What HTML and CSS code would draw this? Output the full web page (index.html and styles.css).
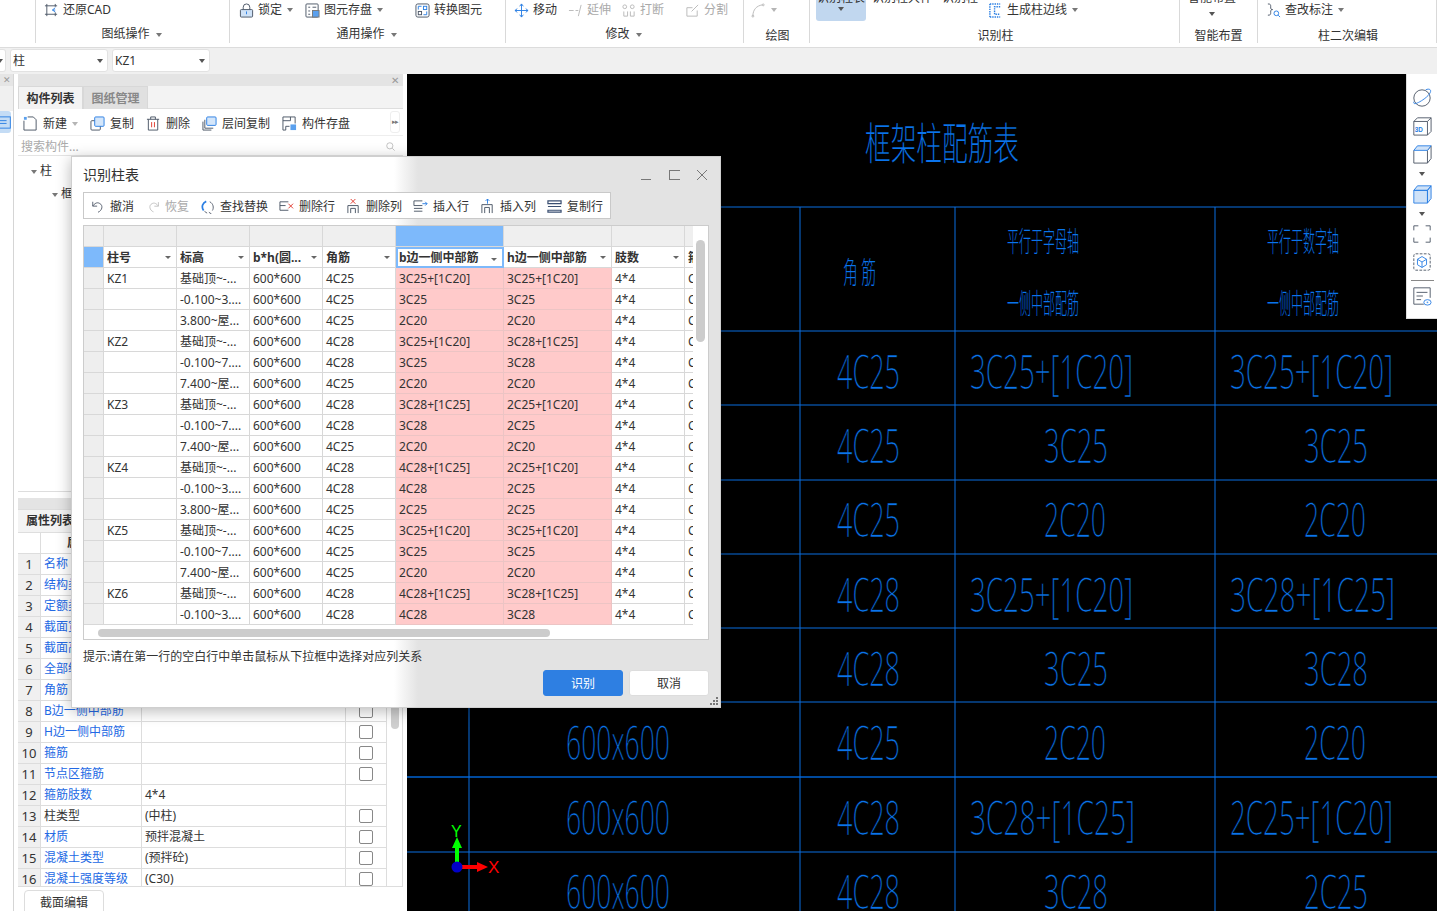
FILE: index.html
```html
<!DOCTYPE html>
<html lang="zh">
<head>
<meta charset="utf-8">
<title>识别柱表</title>
<link rel="stylesheet" href="styles.css">
</head>
<body>
<header class="ribbon">
  <section class="grp g0"></section>
  <section class="grp g1">
    <div class="top">
      <span class="ti"><svg class="ic" viewBox="0 0 16 16"><path class="s" d="M1 3h13M3 1v13M1 12h13M12 1v3M12 10v4"/><path class="a" d="M12 5L9 7.500l3 2M9 7.500h3"/></svg>还原CAD</span>
    </div>
    <div class="lbl up">图纸操作<i class="tri"></i></div>
  </section>
  <section class="grp g2">
    <div class="top">
      <span class="ti t-lock"><svg class="ic" viewBox="0 0 16 16"><path class="s" d="M4.500 7V4.500a3.500 3.500 0 0 1 7 0V7"/><rect class="s f" x="1.500" y="7" width="13" height="8" rx="1"/><path class="a" d="M8 9v3"/></svg>锁定<i class="tri"></i></span>
      <span class="ti t-save"><svg class="ic" viewBox="0 0 16 16"><rect class="s" x="1" y="1" width="13" height="14" rx="1"/><path class="s" d="M3.500 4.500h2M8 4.500h4M3.500 8.500h2M3.500 12h2"/><rect class="af" x="8" y="8" width="7" height="7"/></svg>图元存盘<i class="tri"></i></span>
      <span class="ti"><svg class="ic" viewBox="0 0 16 16"><rect class="s" x="1" y="1" width="14" height="14" rx="2"/><rect class="a" x="9" y="3.500" width="3.500" height="3.500"/><rect class="s" x="3.500" y="9" width="3.500" height="3.500"/><path class="a" d="M3.500 7V3.500H7M12.500 9v3.500H9"/></svg>转换图元</span>
    </div>
    <div class="lbl up">通用操作<i class="tri"></i></div>
  </section>
  <section class="grp g3">
    <div class="top">
      <span class="ti t-move"><svg class="ic" viewBox="0 0 16 16"><path class="a" d="M8 1v14M1 8h14M8 1L6 3.500M8 1l2 2.500M8 15l-2-2.500M8 15l2-2.500M1 8l2.500-2M1 8l2.500 2M15 8l-2.500-2M15 8l-2.500 2"/></svg>移动</span>
      <span class="ti off"><svg class="ic" viewBox="0 0 16 16"><path class="o" d="M1 8h5M8 8h3M14 2L11 14"/></svg>延伸</span>
      <span class="ti off t-break"><svg class="ic" viewBox="0 0 16 16"><path class="o" d="M3 9v5h4V9M10 9v5h4V9"/><circle class="o" cx="4" cy="4" r="2"/><circle class="o" cx="12" cy="4" r="2"/></svg>打断</span>
      <span class="ti off"><svg class="ic" viewBox="0 0 16 16"><path class="o" d="M13 8v6H2V5h6M14 2L7 9"/></svg>分割</span>
    </div>
    <div class="lbl up">修改<i class="tri"></i></div>
  </section>
  <section class="grp g4">
    <div class="top">
      <span class="ti off"><svg class="ic" viewBox="0 0 16 16"><path class="o" d="M2 14C2 7 6 3 12 2"/><circle class="o" cx="2" cy="14" r="1"/><circle class="o" cx="13" cy="2" r="1"/></svg><i class="tri lite"></i></span>
    </div>
    <div class="lbl">绘图</div>
  </section>
  <section class="grp g5">
    <div class="top clip">
      <span class="rb-on"><span class="cut">识别柱表</span><i class="tri dk"></i></span>
      <span class="clip-t">识别柱大样</span>
      <span class="clip-t">识别柱</span>
      <span class="ti t-edge"><svg class="ic" viewBox="0 0 16 16"><path class="dash" d="M2 1h11M2 15h11M2 1v14M13 4h-6v8h6"/></svg>生成柱边线<i class="tri"></i></span>
    </div>
    <div class="lbl">识别柱</div>
  </section>
  <section class="grp g6">
    <div class="top clip"><span class="smart"><span class="cut">智能布置</span><i class="tri dk"></i></span></div>
    <div class="lbl">智能布置</div>
  </section>
  <section class="grp g7">
    <div class="top">
      <span class="ti"><svg class="ic" viewBox="0 0 16 16"><path class="s" d="M2 1c3 0 3 1 3 3s0 3 2 3c-2 0-2 1-2 3s0 3-3 3"/><circle class="a" cx="11" cy="11" r="2.500"/><path class="a" d="M13 13l2 2"/></svg>查改标注<i class="tri"></i></span>
    </div>
    <div class="lbl">柱二次编辑</div>
  </section>
</header>

<div class="optbar">
  <div class="combo c0"><i class="tri dk"></i></div>
  <div class="combo">柱<i class="tri dk"></i></div>
  <div class="combo">KZ1<i class="tri dk"></i></div>
</div>

<main class="work">
  <aside class="rail">
    <div class="rail-h">✕</div>
    <div class="rail-tab"></div>
    <div class="rail-item"><svg class="ic" viewBox="0 0 16 16"><rect class="a" x="-4" y="2" width="15" height="12"/><path class="a" d="M0 6h7M0 9h7"/></svg></div>
  </aside>

  <div class="panel">
    <div class="bar">✕</div>
    <div class="tabs"><span class="tab on">构件列表</span><span class="tab">图纸管理</span></div>
    <div class="ptools">
      <span class="ti t-new"><svg class="ic" viewBox="0 0 16 16"><path class="s" d="M1 5v10h13V4l-3-3H5"/><rect class="af" x="1" y="1" width="3" height="3"/></svg>新建<i class="tri lite"></i></span>
      <span class="ti"><svg class="ic" viewBox="0 0 16 16"><rect class="s" x="1" y="5" width="10" height="10" rx="1"/><rect class="a fb" x="5" y="1" width="10" height="10" rx="1"/></svg>复制</span>
      <span class="ti"><svg class="ic" viewBox="0 0 16 16"><path class="s" d="M1 3.500h13M5 3.500V1h5v2.500M2.500 3.500V15h10V3.500"/><path class="r" d="M6 6.500V12M9 6.500V12"/></svg>删除</span>
      <span class="ti"><svg class="ic" viewBox="0 0 16 16"><path class="s" d="M1 6v9h9M3 4v9h9"/><rect class="a fb" x="5" y="1" width="10" height="9" rx="1"/></svg>层间复制</span>
      <span class="ti"><svg class="ic" viewBox="0 0 16 16"><path class="s" d="M4 15H1V1h13v7M1 5h8V1M4 15v-4h4"/><rect class="af" x="9" y="9" width="6" height="6"/></svg>构件存盘</span>
      <span class="more">▸▸</span>
    </div>
    <div class="psearch">搜索构件...<svg class="ic lens" viewBox="0 0 16 16"><circle class="g" cx="7" cy="7" r="4.500"/><path class="g" d="M10.500 10.500L14 14"/></svg></div>
    <div class="tree">
      <div class="node"><i class="tri"></i>柱</div>
      <div class="node n2"><i class="tri"></i>框架柱</div>
    </div>
    <div class="bar bar2"></div>
    <div class="tabs t2"><span class="tab on wide">属性列表</span></div>
    <div class="props">
      <table class="ptable">
        <colgroup><col class="pc0"><col class="pc1"><col class="pc2"><col class="pc3"></colgroup>
        <thead><tr><th></th><th>属性名称</th><th>属性值</th><th>附加</th></tr></thead>
        <tbody>
          <tr><th>1</th><td class="lnk">名称</td><td>KZ1</td><td></td></tr>
          <tr><th>2</th><td class="lnk">结构类别</td><td>框架柱</td><td><i class="cb"></i></td></tr>
          <tr><th>3</th><td class="lnk">定额类别</td><td>普通柱</td><td><i class="cb"></i></td></tr>
          <tr><th>4</th><td class="lnk">截面宽度</td><td>600</td><td><i class="cb"></i></td></tr>
          <tr><th>5</th><td class="lnk">截面高度</td><td>600</td><td><i class="cb"></i></td></tr>
          <tr><th>6</th><td class="lnk">全部纵筋</td><td></td><td><i class="cb"></i></td></tr>
          <tr><th>7</th><td class="lnk">角筋</td><td>4C25</td><td><i class="cb"></i></td></tr>
          <tr><th>8</th><td class="lnk">B边一侧中部筋</td><td></td><td><i class="cb"></i></td></tr>
          <tr><th>9</th><td class="lnk">H边一侧中部筋</td><td></td><td><i class="cb"></i></td></tr>
          <tr><th>10</th><td class="lnk">箍筋</td><td></td><td><i class="cb"></i></td></tr>
          <tr><th>11</th><td class="lnk">节点区箍筋</td><td></td><td><i class="cb"></i></td></tr>
          <tr><th>12</th><td class="lnk">箍筋肢数</td><td>4*4</td><td></td></tr>
          <tr><th>13</th><td>柱类型</td><td>(中柱)</td><td><i class="cb"></i></td></tr>
          <tr><th>14</th><td class="lnk">材质</td><td>预拌混凝土</td><td><i class="cb"></i></td></tr>
          <tr><th>15</th><td class="lnk">混凝土类型</td><td>(预拌砼)</td><td><i class="cb"></i></td></tr>
          <tr><th>16</th><td class="lnk">混凝土强度等级</td><td>(C30)</td><td><i class="cb"></i></td></tr>
        </tbody>
      </table>
      <div class="pscroll"><div class="pthumb"></div></div>
    </div>
    <div class="pfoot"><span class="secbtn">截面编辑</span></div>
  </div>

  <div class="canvas">
    <svg class="cad" viewBox="407 74 1030 837">
      <path class="ln" d="M720 207H1437M407 331H1437M407 405H1437M407 480H1437M407 554H1437M407 628H1437M407 702H1437M407 852H1437"/>
      <path class="ln thick" d="M407 777H1437"/>
      <path class="ln" d="M469 207V911M800 207V911M955 207V911M1215 207V911"/>
      <text class="zh" x="865" y="160" textLength="154" lengthAdjust="spacingAndGlyphs">框架柱配筋表</text>
      <text class="zh s3" x="843" y="283" textLength="33" lengthAdjust="spacingAndGlyphs">角 筋</text>
      <text class="zh s2" x="1007" y="252" textLength="72" lengthAdjust="spacingAndGlyphs">平行于字母轴</text>
      <text class="zh s2" x="1007" y="314" textLength="72" lengthAdjust="spacingAndGlyphs">一侧中部配筋</text>
      <text class="zh s2" x="1267" y="252" textLength="72" lengthAdjust="spacingAndGlyphs">平行于数字轴</text>
      <text class="zh s2" x="1267" y="314" textLength="72" lengthAdjust="spacingAndGlyphs">一侧中部配筋</text>
      <text class="nm" x="837" y="389" textLength="63" lengthAdjust="spacingAndGlyphs">4C25</text>
      <text class="nm" x="970" y="389" textLength="163" lengthAdjust="spacingAndGlyphs">3C25+[1C20]</text>
      <text class="nm" x="1230" y="389" textLength="163" lengthAdjust="spacingAndGlyphs">3C25+[1C20]</text>
      <text class="nm" x="837" y="463" textLength="63" lengthAdjust="spacingAndGlyphs">4C25</text>
      <text class="nm" x="1044" y="463" textLength="64" lengthAdjust="spacingAndGlyphs">3C25</text>
      <text class="nm" x="1304" y="463" textLength="64" lengthAdjust="spacingAndGlyphs">3C25</text>
      <text class="nm" x="837" y="537" textLength="63" lengthAdjust="spacingAndGlyphs">4C25</text>
      <text class="nm" x="1044" y="537" textLength="62" lengthAdjust="spacingAndGlyphs">2C20</text>
      <text class="nm" x="1304" y="537" textLength="62" lengthAdjust="spacingAndGlyphs">2C20</text>
      <text class="nm" x="837" y="612" textLength="63" lengthAdjust="spacingAndGlyphs">4C28</text>
      <text class="nm" x="970" y="612" textLength="163" lengthAdjust="spacingAndGlyphs">3C25+[1C20]</text>
      <text class="nm" x="1230" y="612" textLength="165" lengthAdjust="spacingAndGlyphs">3C28+[1C25]</text>
      <text class="nm" x="837" y="686" textLength="63" lengthAdjust="spacingAndGlyphs">4C28</text>
      <text class="nm" x="1044" y="686" textLength="64" lengthAdjust="spacingAndGlyphs">3C25</text>
      <text class="nm" x="1304" y="686" textLength="64" lengthAdjust="spacingAndGlyphs">3C28</text>
      <text class="nm" x="566" y="760" textLength="104" lengthAdjust="spacingAndGlyphs">600x600</text>
      <text class="nm" x="837" y="760" textLength="63" lengthAdjust="spacingAndGlyphs">4C25</text>
      <text class="nm" x="1044" y="760" textLength="62" lengthAdjust="spacingAndGlyphs">2C20</text>
      <text class="nm" x="1304" y="760" textLength="62" lengthAdjust="spacingAndGlyphs">2C20</text>
      <text class="nm" x="566" y="835" textLength="104" lengthAdjust="spacingAndGlyphs">600x600</text>
      <text class="nm" x="837" y="835" textLength="63" lengthAdjust="spacingAndGlyphs">4C28</text>
      <text class="nm" x="970" y="835" textLength="165" lengthAdjust="spacingAndGlyphs">3C28+[1C25]</text>
      <text class="nm" x="1230" y="835" textLength="163" lengthAdjust="spacingAndGlyphs">2C25+[1C20]</text>
      <text class="nm" x="566" y="909" textLength="104" lengthAdjust="spacingAndGlyphs">600x600</text>
      <text class="nm" x="837" y="909" textLength="63" lengthAdjust="spacingAndGlyphs">4C28</text>
      <text class="nm" x="1044" y="909" textLength="64" lengthAdjust="spacingAndGlyphs">3C28</text>
      <text class="nm" x="1304" y="909" textLength="64" lengthAdjust="spacingAndGlyphs">2C25</text>
      <rect class="ax-g" x="455" y="846" width="4" height="20"/>
      <path class="ax-g" d="M457 837l-5 11h10z"/>
      <rect class="ax-r" x="460" y="865" width="18" height="4"/>
      <path class="ax-r" d="M488 867l-11-5v10z"/>
      <circle class="ax-b" cx="457" cy="867" r="5.500"/>
      <text class="ax-gt" x="451" y="837">Y</text>
      <text class="ax-rt" x="488" y="873">X</text>
    </svg>

    <aside class="strip">
      <svg class="si" viewBox="0 0 22 22"><ellipse class="s" cx="11" cy="11" rx="9" ry="9"/><path class="a" d="M2 15C1 19 6 17 12 13s10-9 8-11c-1-1-3-1-5 0"/></svg>
      <svg class="si" viewBox="0 0 22 22"><path class="s" d="M2 6h15v15H2zM2 6l4-4h15v15l-4 4M17 6l4-4"/><text class="tx3d" x="3" y="18">3D</text></svg>
      <svg class="si" viewBox="0 0 22 22"><path class="s" d="M2 7v14h15V7l4-5v14l-4 5"/><path class="a lb" d="M2 7l4-5h15l-4 5z"/></svg>
      <i class="tri big"></i>
      <svg class="si" viewBox="0 0 22 22"><path class="a lb" d="M2 7h15v14H2zM2 7l4-5h15l-4 5zM17 7l4-5v14l-4 5z"/></svg>
      <i class="tri big"></i>
      <svg class="si" viewBox="0 0 22 22"><path class="s" d="M2 7V2h5M15 2h5v5M20 15v5h-5M7 20H2v-5"/></svg>
      <svg class="si" viewBox="0 0 22 22"><rect class="s dsh" x="2" y="2" width="18" height="18" rx="2"/><path class="a" d="M11 5l5 3v6l-5 3-5-3V8zM6 8l5 3 5-3M11 11v6"/></svg>
      <div class="sep"></div>
      <svg class="si" viewBox="0 0 22 22"><path class="s" d="M13 20H2V2h18v11M5 7h12M5 11h7M5 15h5"/><ellipse class="a" cx="17" cy="18" rx="4" ry="3"/><circle class="af" cx="17" cy="18" r="1"/></svg>
    </aside>
  </div>

  <div class="dlg">
    <div class="dlg-h">
      <span class="dlg-t">识别柱表</span>
      <span class="win">
        <svg class="wi" viewBox="0 0 12 12"><path class="g2" d="M1 10.500H11"/></svg>
        <svg class="wi" viewBox="0 0 12 12"><rect class="g2" x="1.500" y="1.500" width="9" height="9"/></svg>
        <svg class="wi" viewBox="0 0 12 12"><path class="g2" d="M1 1l10 10M11 1L1 11"/></svg>
      </span>
    </div>
    <div class="dtools">
      <span class="ti mr2"><svg class="ic14" viewBox="0 0 16 16"><path class="s" d="M2 2v5h5M2 7c2-3 5-5 8-3 4 2 3 8-2 10"/></svg>撤消</span>
      <span class="ti off mr1"><svg class="ic13" viewBox="0 0 16 16"><path class="o" d="M14 2v5H9M14 7c-2-3-5-5-8-3-4 2-3 8 2 10"/></svg>恢复</span>
      <span class="ti"><svg class="ic14" viewBox="0 0 16 16"><path class="a2" d="M6 1.500C2 3 0 8 3 12"/><path class="s" d="M10 2c4 2 5 7 3 10M9 14l3 2M4 13l3 2"/></svg>查找替换</span>
      <span class="ti"><svg class="ic15" viewBox="0 0 16 16"><path class="s" d="M10 3H1v9h9M1 7h6"/><path class="r" d="M10 5l5 5M15 5l-5 5"/></svg>删除行</span>
      <span class="ti"><svg class="ic15" viewBox="0 0 16 16"><path class="r" d="M5 0l5 5M10 0L5 5"/><path class="s" d="M2 15V7h11v8M5 15V10h5v5"/></svg>删除列</span>
      <span class="ti"><svg class="ic15" viewBox="0 0 16 16"><path class="s" d="M10 2H1v5h9M1 10h9M1 13h9"/><path class="a" d="M10 5h5M13 3l2 2-2 2"/></svg>插入行</span>
      <span class="ti"><svg class="ic15" viewBox="0 0 16 16"><path class="a" d="M8 5V0M6 2l2-2 2 2"/><path class="s" d="M2 15V6h11v9M5 15v-6h5v6"/></svg>插入列</span>
      <span class="ti"><svg class="ic15" viewBox="0 0 16 16"><path class="s2" d="M1 2h14v3H1zM1 8h14M1 12h14v2H1z"/></svg>复制行</span>
    </div>
    <div class="grid">
      <div class="gwrap">
        <table class="gtable">
          <colgroup><col class="c0"><col class="c1"><col class="c1"><col class="c1"><col class="c1"><col class="c2"><col class="c2"><col class="c1"><col class="c1"></colgroup>
          <thead>
            <tr class="r0"><th></th><th></th><th></th><th></th><th></th><th class="sel"></th><th></th><th></th><th></th></tr>
            <tr class="r1"><th class="sel"></th><th class="dd">柱号</th><th class="dd">标高</th><th class="dd">b*h(圆...</th><th class="dd">角筋</th><th class="dd cur">b边一侧中部筋</th><th class="dd">h边一侧中部筋</th><th class="dd">肢数</th><th class="dd">箍筋</th></tr>
          </thead>
          <tbody>
            <tr><th></th><td>KZ1</td><td>基础顶~-...</td><td>600*600</td><td>4C25</td><td class="p">3C25+[1C20]</td><td class="p">3C25+[1C20]</td><td>4*4</td><td>C30</td></tr>
            <tr><th></th><td></td><td>-0.100~3....</td><td>600*600</td><td>4C25</td><td class="p">3C25</td><td class="p">3C25</td><td>4*4</td><td>C30</td></tr>
            <tr><th></th><td></td><td>3.800~屋...</td><td>600*600</td><td>4C25</td><td class="p">2C20</td><td class="p">2C20</td><td>4*4</td><td>C30</td></tr>
            <tr><th></th><td>KZ2</td><td>基础顶~-...</td><td>600*600</td><td>4C28</td><td class="p">3C25+[1C20]</td><td class="p">3C28+[1C25]</td><td>4*4</td><td>C30</td></tr>
            <tr><th></th><td></td><td>-0.100~7....</td><td>600*600</td><td>4C28</td><td class="p">3C25</td><td class="p">3C28</td><td>4*4</td><td>C30</td></tr>
            <tr><th></th><td></td><td>7.400~屋...</td><td>600*600</td><td>4C25</td><td class="p">2C20</td><td class="p">2C20</td><td>4*4</td><td>C30</td></tr>
            <tr><th></th><td>KZ3</td><td>基础顶~-...</td><td>600*600</td><td>4C28</td><td class="p">3C28+[1C25]</td><td class="p">2C25+[1C20]</td><td>4*4</td><td>C30</td></tr>
            <tr><th></th><td></td><td>-0.100~7....</td><td>600*600</td><td>4C28</td><td class="p">3C28</td><td class="p">2C25</td><td>4*4</td><td>C30</td></tr>
            <tr><th></th><td></td><td>7.400~屋...</td><td>600*600</td><td>4C25</td><td class="p">2C20</td><td class="p">2C20</td><td>4*4</td><td>C30</td></tr>
            <tr><th></th><td>KZ4</td><td>基础顶~-...</td><td>600*600</td><td>4C28</td><td class="p">4C28+[1C25]</td><td class="p">2C25+[1C20]</td><td>4*4</td><td>C30</td></tr>
            <tr><th></th><td></td><td>-0.100~3....</td><td>600*600</td><td>4C28</td><td class="p">4C28</td><td class="p">2C25</td><td>4*4</td><td>C30</td></tr>
            <tr><th></th><td></td><td>3.800~屋...</td><td>600*600</td><td>4C25</td><td class="p">2C25</td><td class="p">2C25</td><td>4*4</td><td>C30</td></tr>
            <tr><th></th><td>KZ5</td><td>基础顶~-...</td><td>600*600</td><td>4C25</td><td class="p">3C25+[1C20]</td><td class="p">3C25+[1C20]</td><td>4*4</td><td>C30</td></tr>
            <tr><th></th><td></td><td>-0.100~7....</td><td>600*600</td><td>4C25</td><td class="p">3C25</td><td class="p">3C25</td><td>4*4</td><td>C30</td></tr>
            <tr><th></th><td></td><td>7.400~屋...</td><td>600*600</td><td>4C25</td><td class="p">2C20</td><td class="p">2C20</td><td>4*4</td><td>C30</td></tr>
            <tr><th></th><td>KZ6</td><td>基础顶~-...</td><td>600*600</td><td>4C28</td><td class="p">4C28+[1C25]</td><td class="p">3C28+[1C25]</td><td>4*4</td><td>C30</td></tr>
            <tr><th></th><td></td><td>-0.100~3....</td><td>600*600</td><td>4C28</td><td class="p">4C28</td><td class="p">3C28</td><td>4*4</td><td>C30</td></tr>
          </tbody>
        </table>
        <div class="vs"><div class="vthumb"></div></div>
      </div>
      <div class="hs"><div class="hthumb"></div></div>
    </div>
    <div class="hint">提示:请在第一行的空白行中单击鼠标从下拉框中选择对应列关系</div>
    <div class="acts"><span class="btn pri">识别</span><span class="btn">取消</span></div>
    <svg class="grip" viewBox="0 0 9 9"><path class="gp" d="M6 0h2v2H6zM3 3h2v2H3zM6 3h2v2H6zM0 6h2v2H0zM3 6h2v2H3zM6 6h2v2H6z"/></svg>
  </div>
</main>
</body>
</html>
```
FILE: styles.css
```css
* { box-sizing: border-box; }
html, body { margin: 0; padding: 0; }
body {
  width: 1437px; height: 911px; overflow: hidden; background: #f0f0f0; color: #333;
  font: 12px/16px "Noto Sans", "Noto Sans CJK SC", sans-serif;
}
i { font-style: normal; }
svg { display: block; flex: none; fill: none; stroke-width: 1; }
.s { stroke: #4b5565; }
.s2 { stroke: #3a4f72; stroke-width: 1.300; }
.f { fill: #cfe2f7; }
.a { stroke: #2b7fe3; }
.a2 { stroke: #2b7fe3; stroke-width: 2; }
.af { fill: #5aa0ee; }
.fb { fill: #d4e6fa; }
.lb { fill: #cfe2f8; }
.r { stroke: #e0392d; }
.o { stroke: #b9b9b9; }
.g { stroke: #aaa; }
.g2 { stroke: #777; }
.dash { stroke: #2b7fe3; stroke-width: 1.500; stroke-dasharray: 1.500 1; }
.dsh { stroke-dasharray: 3 1.500; }
.ic { width: 15px; height: 15px; }
.ic13 { width: 13px; height: 14px; }
.ic14 { width: 14px; height: 14px; }
.ic15 { width: 15px; height: 15px; }

.tri {
  display: inline-block; width: 0; height: 0; border: 3.500px solid transparent;
  border-top: 4px solid #777; border-bottom-width: 0; vertical-align: middle;
}
.tri.dk { border-top-color: #555; }
.tri.lite { border-top-color: #b5b5b5; }
.tri.big { display: block; border-width: 4px 3.500px 0; border-color: #555 transparent transparent; }

.ti { display: inline-flex; align-items: center; gap: 5px; white-space: nowrap; height: 18px; }
.ti.off { color: #aaa; }
.top .ti { gap: 4px; }
.top .ti .tri { margin-left: 1px; }

/* ribbon */
.ribbon { display: flex; height: 48px; background: #fff; border-bottom: 1px solid #dcdcdc; overflow: hidden; }
.grp { display: flex; flex-direction: column; height: 43px; border-right: 1px solid #d9d9d9; flex: none; }
.g0 { width: 36px; }
.g1 { width: 194px; }
.g2 { width: 276px; }
.g3 { width: 238px; }
.g4 { width: 66px; }
.g5 { width: 370px; }
.g6 { width: 78px; }
.g7 { width: 179px; }
.top { display: flex; align-items: flex-start; height: 26px; flex: none; padding-top: 1px; }
.g1 .top { padding-left: 8px; }
.g2 .top { padding-left: 9px; }
.g3 .top { padding-left: 8px; gap: 10px; }
.g4 .top { padding-left: 7px; }
.g7 .top { padding-left: 8px; }
.t-lock { margin-right: 12px; }
.t-save { margin-right: 32px; }
.t-move { margin-right: 1px; }
.t-break { margin-right: 11px; }
.lbl { text-align: center; height: 16px; margin-top: 2px; white-space: nowrap; }
.lbl.up { margin-top: 0; padding-right: 2px; }
.lbl .tri { margin-left: 6px; }
.g4 .lbl { padding-left: 2px; }
.g5 .lbl, .g7 .lbl { padding-left: 2px; }
.top.clip { padding: 0 0 0 6px; }
.rb-on {
  width: 50px; height: 21px; background: #c1d7ef; border-radius: 0 0 3px 3px; white-space: nowrap;
  line-height: 8px; display: flex; flex-direction: column; align-items: center; gap: 5px;
}
.cut { margin-top: -6px; }
.clip-t { line-height: 8px; white-space: nowrap; margin: -6px 0 0 6px; }
.clip-t + .clip-t { margin-left: 10px; }
.t-edge { margin: 1px 0 0 10px; }
.smart { margin-left: 2px; line-height: 8px; display: flex; flex-direction: column; align-items: center; gap: 10px; width: 48px; white-space: nowrap; }

/* option bar */
.optbar { display: flex; gap: 4px; height: 26px; padding-top: 1px; }
.combo {
  width: 98px; height: 23px; background: #fff; border: 1px solid #e2e2e2; border-radius: 3px;
  padding-left: 2px; line-height: 21px; position: relative;
}
.combo.c0 { width: 6px; padding: 0; border-left: 0; border-radius: 0 3px 3px 0; }
.combo .tri { position: absolute; right: 4px; top: 9px; }
.combo.c0 .tri { right: 2px; }

/* work */
.work { display: flex; height: 837px; position: relative; background: #fff; }
.rail { width: 14px; flex: none; border-right: 1px solid #d5d5d5; background: #fff; }
.rail-h { height: 12px; background: #e5e5e5; color: #999; font-size: 9px; line-height: 12px; text-align: center; }
.rail-tab { height: 25px; background: #f0f0f0; }
.rail-item { width: 11px; height: 22px; background: #c4dcf5; border-radius: 0 3px 3px 0; padding-top: 4px; overflow: hidden; }
.panel { width: 385px; margin-left: 4px; flex: none; display: flex; flex-direction: column; background: #fff; }
.bar { height: 12px; background: #e4e4e4; color: #999; font-size: 10px; line-height: 12px; text-align: right; padding-right: 4px; flex: none; }
.tabs { display: flex; height: 23px; background: #f3f3f3; border-bottom: 1px solid #dedede; flex: none; }
.tab { width: 65px; height: 23px; background: #e0e0e0; color: #888; font-weight: 700; line-height: 23px; text-align: center; border: 1px solid #d8d8d8; border-bottom: 0; }
.tab.on { background: #f3f3f3; color: #333; }
.ptools { display: flex; align-items: center; height: 27px; padding: 3px 0 0 5px; gap: 12px; border-bottom: 1px solid #eee; position: relative; flex: none; }
.more { position: absolute; right: 3px; top: 2px; width: 10px; height: 22px; border: 1px solid #eee; border-radius: 3px; font-size: 7px; line-height: 20px; color: #777; text-align: center; overflow: hidden; letter-spacing: -1px; }
.psearch { height: 20px; line-height: 19px; padding: 1px 7px 0 3px; color: #aaa; display: flex; justify-content: space-between; align-items: center; border-bottom: 1px solid #e4e4e4; flex: none; }
.lens { width: 11px; height: 11px; }
.tree { height: 336px; border-bottom: 1px solid #ddd; padding: 8px 0 0 13px; flex: none; }
.node { height: 23px; line-height: 14px; }
.node .tri { margin-right: 3px; }
.n2 { padding-left: 21px; }
.bar2 { margin-top: 6px; height: 11px; }
.tabs.t2 { height: 24px; background: #f3f3f3; border-top: 1px solid #ddd; }
.tab.wide { width: 100%; text-align: left; padding-left: 8px; border: 0; height: 21px; line-height: 21px; }
.props { display: flex; flex: none; height: 354px; overflow: hidden; border-bottom: 1px solid #ddd; border-right: 1px solid #ddd; }
.ptable { border-collapse: separate; border-spacing: 0; table-layout: fixed; width: 369px; height: 357px; flex: none; }
.pc0 { width: 23px; } .pc1 { width: 101px; } .pc2 { width: 204px; } .pc3 { width: 41px; }
.ptable tr { height: 21px; }
.ptable td, .ptable th { border-right: 1px solid #ddd; border-bottom: 1px solid #ddd; padding: 0 3px; font-weight: 400; white-space: nowrap; overflow: hidden; }
.ptable tbody th { background: #f0f0f0; font-size: 13px; text-align: center; padding: 0; }
.ptable thead th { background: #fff; text-align: center; font-weight: 700; }
.ptable td:last-child { text-align: center; padding: 0; }
.lnk { color: #2369e4; }
.cb { display: block; width: 14px; height: 14px; margin: 0 auto; border: 1px solid #888; border-radius: 2px; background: #fff; }
.pscroll { flex: 1; padding: 0 4px; }
.pthumb { width: 8px; height: 196px; background: #cfcfcf; border-radius: 4px; }
.pfoot { flex: 1; padding: 3px 0 0 6px; }
.secbtn { display: block; width: 80px; height: 26px; border: 1px solid #ddd; border-radius: 4px; text-align: center; line-height: 23px; }

/* canvas */
.canvas { position: absolute; left: 407px; top: 0; width: 1030px; height: 837px; background: #000; overflow: hidden; }
.cad { width: 1030px; height: 837px; }
.ln { stroke: #0b6fe0; stroke-width: 1; }
.ln.thick { stroke: #00499c; stroke-width: 2; }
.nm { fill: #0a74ec; stroke: #000; stroke-width: .6; paint-order: fill stroke; font: 300 48px "Open Sans", "Liberation Sans", sans-serif; }
.zh { fill: #0a74ec; stroke: #000; stroke-width: .25; paint-order: fill stroke; font: 300 44px "Noto Sans CJK SC", sans-serif; }
.zh.s2 { font-size: 28px; stroke-width: .1; }
.zh.s3 { font-size: 30px; stroke-width: .1; }
.ax-g { fill: #0f0; } .ax-r { fill: #f00; } .ax-b { fill: #0000c8; }
.ax-gt { fill: #0f0; font: 16px "Liberation Sans", sans-serif; }
.ax-rt { fill: #f00; font: 17px "Liberation Sans", sans-serif; }
.strip {
  position: absolute; right: 0; top: 0; width: 31px; height: 245px; background: #fff;
  display: flex; flex-direction: column; align-items: center; padding-top: 14px; gap: 8px;
  border: 1px solid #ddd; border-width: 0 0 1px 1px;
}
.si { width: 20px; height: 20px; }
.sep { width: 23px; border-top: 1px solid #888; margin-bottom: -3px; }
.tx3d { fill: #2b7fe3; font: 700 7px "Liberation Sans", sans-serif; }

/* dialog */
.dlg {
  position: absolute; left: 71px; top: 82px; width: 650px; height: 552px;
  padding: 0 11px; border: 1px solid #cfcfcf;
  background: linear-gradient(90deg, #fff 0, #fff 322px, #e3e3e3 346px, #e3e3e3 100%);
  box-shadow: 0 3px 14px rgba(0,0,0,.28);
}
.dlg-h { display: flex; justify-content: space-between; align-items: center; height: 35px; padding-top: 1px; }
.dlg-t { font-size: 14px; line-height: 20px; }
.win { display: flex; gap: 16px; margin-right: 1px; }
.wi { width: 12px; height: 12px; }
.dtools { display: flex; align-items: center; gap: 11px; width: 528px; height: 27px; padding: 2px 0 0 7px; background: #fff; border: 1px solid #c9c9c9; }
.mr2 { margin-right: 2px; } .mr1 { margin-right: 1px; }
.grid { margin-top: 6px; width: 626px; height: 415px; background: #fff; border: 1px solid #ccc; }
.gwrap { display: flex; height: 399px; overflow: hidden; }
.gtable { border-collapse: separate; border-spacing: 0; table-layout: fixed; width: 674px; flex: none; margin-right: -65px; }
.c0 { width: 20px; } .c1 { width: 73px; } .c2 { width: 108px; }
.gtable tr { height: 21px; }
.gtable td, .gtable th { border-right: 1px solid #d8d8d8; border-bottom: 1px solid #d8d8d8; padding: 1px 3px 0; white-space: nowrap; overflow: hidden; font-weight: 400; line-height: 19px; }
.gtable tbody th { background: #eee; }
.gtable .r0 th { background: #efefef; }
.gtable .r1 th { background: #fff; text-align: left; font-weight: 700; }
.gtable .r0 th.sel, .gtable .r1 th.sel { background: #7db9fb; }
.dd { position: relative; }
.dd::after { content: ""; position: absolute; right: 5px; top: 9px; border: 3px solid transparent; border-top: 3.500px solid #666; border-bottom-width: 0; }
.gtable th.cur { border: 2px solid #7db9fb; padding: 0 0 0 1px; line-height: 17px; }
.gtable td.p { background: #ffcaca; border-color: #ecc4c4; }
.vs { position: relative; width: 15px; background: #fff; flex: none; padding: 14px 3px 0; z-index: 1; }
.vthumb { width: 9px; height: 102px; background: #ccc; border-radius: 5px; }
.hs { height: 14px; padding: 4px 0 0 14px; }
.hthumb { width: 452px; height: 8px; background: #ccc; border-radius: 4px; }
.hint { margin-top: 9px; line-height: 16px; white-space: nowrap; }
.acts { display: flex; justify-content: flex-end; gap: 6px; margin-top: 5px; }
.btn { width: 80px; height: 26px; border-radius: 3px; background: #fff; border: 1px solid #ddd; text-align: center; line-height: 25px; }
.btn.pri { background: #2e7fe2; border-color: #2e7fe2; color: #fff; }
.grip { position: absolute; right: 1px; bottom: 1px; width: 9px; height: 9px; }
.gp { fill: #777; }
```
